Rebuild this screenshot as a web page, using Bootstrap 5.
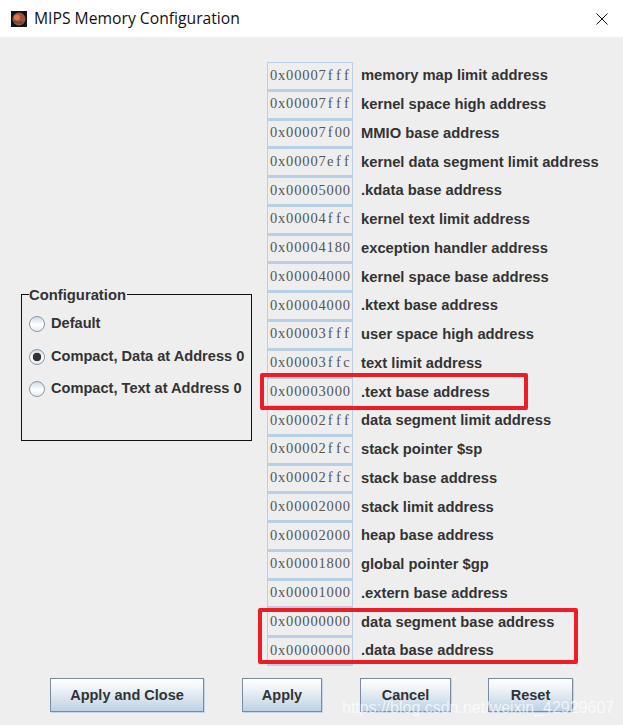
<!DOCTYPE html>
<html lang="en">
<head>
    <meta charset="UTF-8">
    <meta name="viewport" content="width=device-width, initial-scale=1.0">
    <title>MIPS Memory Configuration</title>
    <link href="https://cdn.jsdelivr.net/npm/bootstrap@5.3.0/dist/css/bootstrap.min.css" rel="stylesheet">
    <style>
        body { background: #eeeeee; color: #333; font-family: "Liberation Sans", Arial, sans-serif; overflow: hidden; }
        .dialog-page { width: 623px; height: 725px; }
        .title-bar { height: 37px; background: #fff; padding-left: 11px; padding-right: 15px; font-family: "Open Sans", "Noto Sans", sans-serif; font-size: 15.7px; color: #111; }
        .title-bar svg { margin-right: 7px; }
        .close-x { margin-right: 0 !important; }
        .dialog-body { padding-top: 25px; }
        .left-pane { width: 267px; padding-left: 21px; }
        .config-group { width: 231px; height: 154px; border: 1px solid #111; padding: 0 7px; margin: 0; }
        .config-group legend { float: none; width: auto; font-size: 14.8px; font-weight: 700; line-height: 16px; margin: 0 0 5px 0; padding: 0 1px 0 0; }
        .radio-line { min-height: 0; height: 32.5px; padding-left: 0; margin: 0; gap: 6px; font-size: 14.6px; font-weight: 700; }
        .radio-line .form-check-input { width: 16px; height: 16px; margin: 0; float: none; flex: none; border: 1px solid #8b96a5; background: linear-gradient(#cfdbe8, #fff 55%, #e3ebf4); }
        .radio-line .form-check-input:checked { background: radial-gradient(circle, #333 0 4px, transparent 4.6px), linear-gradient(#cfdbe8, #fff 55%, #e3ebf4); border-color: #8b96a5; }
        .radio-line .form-check-label { white-space: nowrap; opacity: 1; }
        .mem-row { height: 28.75px; font-size: 14.75px; }
        .mem-value { width: 86px; height: 100%; padding-left: 1.5px; padding-bottom: 1px; border: 1px solid #b8cfe6; border-bottom-width: 2px; font-family: "Liberation Serif", serif; font-size: 14.5px; color: #555; }
        .mem-digit { display: inline-block; width: 8.1px; text-align: center; }
        .mem-label { padding-left: 8px; padding-bottom: 2px; font-weight: 700; white-space: nowrap; }
        .button-bar { padding-top: 12px; padding-left: 50px; }
        .swing-btn { height: 34px; padding: 0; border: 1px solid #7a8ba0; border-radius: 0; color: #333; font-size: 14.5px; font-weight: 700; line-height: 32px; background: linear-gradient(#fff, #f2f6fa 25%, #bed1e4); box-shadow: 1px 1px 0 #c5d5e5; }
        .btn-close-apply { width: 154px; margin-right: 38px; }
        .btn-apply { width: 80px; margin-right: 38px; }
        .btn-cancel { width: 91px; margin-right: 37px; }
        .btn-reset { width: 85px; }
        .mark-box { position: absolute; border: 4px solid #ee1c25; border-radius: 2px; }
        .mark-text { left: 260px; top: 373px; width: 268px; height: 37px; }
        .mark-data { left: 258px; top: 608px; width: 320px; height: 56px; }
        .watermark { position: absolute; left: 342px; top: 696px; font-size: 16px; color: rgba(255, 255, 255, .72); white-space: nowrap; }
    </style>
</head>
<body>
<div class="dialog-page position-relative d-flex flex-column">

    <div class="title-bar d-flex align-items-center">
        <svg width="16" height="16" viewBox="0 0 16 16">
            <rect width="16" height="16" fill="#10141a"/>
            <circle cx="8" cy="8" r="6.5" fill="#a04f38"/>
            <circle cx="6" cy="6.5" r="3" fill="#d97a4e"/>
            <path d="M3 10q4 3 9 1" stroke="#5d4d4a" stroke-width="2" fill="none"/>
        </svg>
        <span class="flex-grow-1">MIPS Memory Configuration</span>
        <svg class="close-x" width="12" height="12" viewBox="0 0 12 12">
            <path d="M.5.5l11 11M11.5.5l-11 11" stroke="#111" stroke-width="1" fill="none"/>
        </svg>
    </div>

    <div class="dialog-body d-flex">
        <div class="left-pane d-flex align-items-center">
            <fieldset class="config-group">
                <legend>Configuration</legend>
                <div class="form-check radio-line d-flex align-items-center">
                    <input class="form-check-input" type="radio" name="cfg" id="cfg1">
                    <label class="form-check-label" for="cfg1">Default</label>
                </div>
                <div class="form-check radio-line d-flex align-items-center">
                    <input class="form-check-input" type="radio" name="cfg" id="cfg2" checked>
                    <label class="form-check-label" for="cfg2">Compact, Data at Address 0</label>
                </div>
                <div class="form-check radio-line d-flex align-items-center">
                    <input class="form-check-input" type="radio" name="cfg" id="cfg3">
                    <label class="form-check-label" for="cfg3">Compact, Text at Address 0</label>
                </div>
            </fieldset>
        </div>
        <div id="memRows"></div>
    </div>

    <div class="button-bar d-flex">
        <button type="button" class="btn swing-btn btn-close-apply">Apply and Close</button>
        <button type="button" class="btn swing-btn btn-apply">Apply</button>
        <button type="button" class="btn swing-btn btn-cancel">Cancel</button>
        <button type="button" class="btn swing-btn btn-reset">Reset</button>
    </div>

    <div class="mark-box mark-text"></div>
    <div class="mark-box mark-data"></div>
    <div class="watermark">https://blog.csdn.net/weixin_42929607</div>
</div>

<script>
    const rows = [
        ['0x00007fff', 'memory map limit address'],
        ['0x00007fff', 'kernel space high address'],
        ['0x00007f00', 'MMIO base address'],
        ['0x00007eff', 'kernel data segment limit address'],
        ['0x00005000', '.kdata base address'],
        ['0x00004ffc', 'kernel text limit address'],
        ['0x00004180', 'exception handler address'],
        ['0x00004000', 'kernel space base address'],
        ['0x00004000', '.ktext base address'],
        ['0x00003fff', 'user space high address'],
        ['0x00003ffc', 'text limit address'],
        ['0x00003000', '.text base address'],
        ['0x00002fff', 'data segment limit address'],
        ['0x00002ffc', 'stack pointer $sp'],
        ['0x00002ffc', 'stack base address'],
        ['0x00002000', 'stack limit address'],
        ['0x00002000', 'heap base address'],
        ['0x00001800', 'global pointer $gp'],
        ['0x00001000', '.extern base address'],
        ['0x00000000', 'data segment base address'],
        ['0x00000000', '.data base address']
    ];
    // the value font is a serif on fixed cells, so each character gets its own cell
    const cells = v => v.split('').map(c => `<span class="mem-digit">${c}</span>`).join('');
    document.getElementById('memRows').innerHTML = rows.map(r =>
        `<div class="mem-row d-flex align-items-center"><div class="mem-value d-flex align-items-center">${cells(r[0])}</div><div class="mem-label">${r[1]}</div></div>`
    ).join('');
</script>
<script src="https://cdn.jsdelivr.net/npm/bootstrap@5.3.0/dist/js/bootstrap.bundle.min.js"></script>
</body>
</html>
